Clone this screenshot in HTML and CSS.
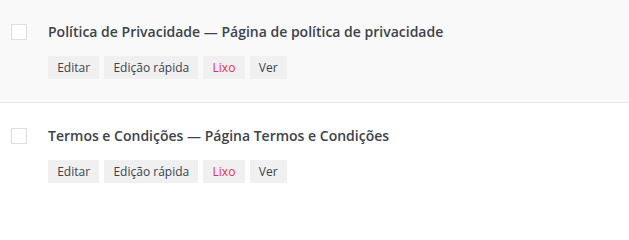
FILE: index.html
```html
<!DOCTYPE html>
<html lang="pt">
<head>
<meta charset="utf-8">
<link rel="stylesheet" href="styles.css">
</head>
<body>
<div class="list">
  <div class="row alt">
    <span class="check"></span>
    <div class="content">
      <div class="title">Política de Privacidade — Página de política de privacidade</div>
      <div class="actions">
        <span class="btn">Editar</span>
        <span class="btn">Edição rápida</span>
        <span class="btn trash">Lixo</span>
        <span class="btn">Ver</span>
      </div>
    </div>
  </div>
  <div class="row">
    <span class="check"></span>
    <div class="content">
      <div class="title">Termos e Condições — Página Termos e Condições</div>
      <div class="actions">
        <span class="btn">Editar</span>
        <span class="btn">Edição rápida</span>
        <span class="btn trash">Lixo</span>
        <span class="btn">Ver</span>
      </div>
    </div>
  </div>
</div>
</body>
</html>
```

FILE: styles.css
```css
html, body {
  margin: 0;
  padding: 0;
  background: #fff;
}
body {
  font-family: "Open Sans", "Noto Sans", sans-serif;
  color: #3c434a;
}
.list {
  margin-top: -1px;
}
.row {
  display: flex;
  gap: 21px;
  padding: 23px 0 23px 11px;
  border-bottom: 1px solid #e6e6e6;
}
.row:last-child {
  border-bottom: none;
}
.row.alt {
  background: #f9f9f9;
}
.check {
  flex: none;
  width: 14px;
  height: 14px;
  margin-top: 2px;
  border: 1px solid #dddddd;
  background: #fff;
}
.title {
  font-size: 14px;
  font-weight: 600;
  line-height: 20px;
  color: #3c434a;
}
.actions {
  display: flex;
  gap: 5px;
  margin-top: 14px;
}
.btn {
  font-size: 12px;
  line-height: 15px;
  padding: 4px 9.2px;
  background: #f0f0f0;
  color: #3c434a;
}
.btn.trash {
  color: #e0305c;
}
```
